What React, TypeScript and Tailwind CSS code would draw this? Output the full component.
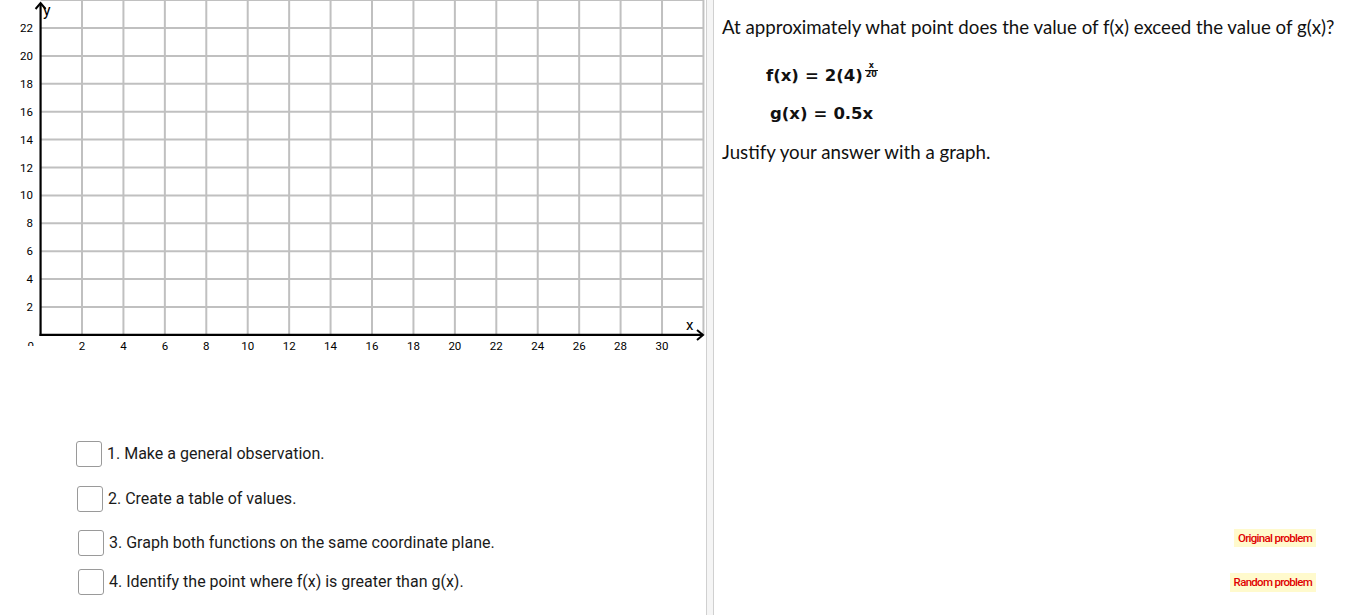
import React from "react";

const ox = 40.57;
const dx = 41.43;
const oy = 334.9;
const dy = 27.9;

function Graph() {
  const vLines = Array.from({ length: 16 }, (_, i) => ox + (i + 1) * dx);
  const hLines = Array.from({ length: 12 }, (_, i) => oy - (i + 1) * dy);
  return (
    <svg width={706} height={360} className="block" style={{ fontFamily: "Roboto, sans-serif" }}>
      <defs>
        <clipPath id="zeroClip">
          <rect x={0} y={336} width={40} height={10} />
        </clipPath>
      </defs>
      {vLines.map((x, i) => (
        <line key={"v" + i} x1={x} y1={0} x2={x} y2={oy} stroke="#c0c0c0" strokeWidth={2} />
      ))}
      {hLines.map((y, i) => (
        <line key={"h" + i} x1={ox} y1={y} x2={704} y2={y} stroke="#c0c0c0" strokeWidth={2} />
      ))}
      <line x1={ox} y1={4} x2={ox} y2={oy + 1} stroke="#000" strokeWidth={2.2} />
      <line x1={ox - 1} y1={oy} x2={703} y2={oy} stroke="#000" strokeWidth={2.2} />
      <polyline points={`${ox - 5},9 ${ox},3 ${ox + 5},9`} fill="none" stroke="#000" strokeWidth={2} />
      <polyline points={`${697},${oy - 5} ${703},${oy} ${697},${oy + 5}`} fill="none" stroke="#000" strokeWidth={2} />
      <text x={43} y={16} fontSize={16} fill="#000">y</text>
      <text x={686} y={330} fontSize={15} fill="#000">x</text>
      {Array.from({ length: 15 }, (_, i) => (
        <text key={"xl" + i} x={ox + (i + 1) * dx} y={350} fontSize={11.5} textAnchor="middle" fill="#000">
          {(i + 1) * 2}
        </text>
      ))}
      {Array.from({ length: 11 }, (_, i) => (
        <text key={"yl" + i} x={33} y={oy - (i + 1) * dy + 4} fontSize={11.5} textAnchor="end" fill="#000">
          {(i + 1) * 2}
        </text>
      ))}
      <text x={34} y={350} fontSize={11.5} textAnchor="end" fill="#000" clipPath="url(#zeroClip)">0</text>
    </svg>
  );
}

function Check({ label, cls }: { label: string; cls: string }) {
  return (
    <div className={"flex items-center " + cls}>
      <div className="w-[26px] h-[26px] rounded-[3px] border border-[#9a9a9a] bg-white" />
      <span className="ml-[5px] text-[16px] text-[#1a1a1a]" style={{ fontFamily: "Roboto, sans-serif" }}>
        {label}
      </span>
    </div>
  );
}

export default function App() {
  return (
    <div className="flex w-[1348px] h-[615px] bg-white overflow-hidden">
      <div className="w-[706px] flex flex-col shrink-0">
        <Graph />
        <div className="flex flex-col">
          <Check cls="mt-[81px] pl-[76px]" label="1. Make a general observation." />
          <Check cls="mt-[19px] pl-[77px]" label="2. Create a table of values." />
          <Check cls="mt-[18px] pl-[78px]" label="3. Graph both functions on the same coordinate plane." />
          <Check cls="mt-[13px] pl-[78px]" label="4. Identify the point where f(x) is greater than g(x)." />
        </div>
      </div>
      <div className="w-[8px] shrink-0 bg-[#f5f5f5] border-l border-r border-[#d0d0d0]" />
      <div className="flex-1 flex flex-col h-full">
        <div className="pl-[8px] text-[#111]">
          <div className="mt-[16px] text-[18.7px] leading-[22px]" style={{ fontFamily: "Lato, sans-serif" }}>
            At approximately what point does the value of f(x) exceed the value of g(x)?
          </div>
          <div
            className="mt-[26px] ml-[44px] font-bold text-[16.5px] leading-[24px] flex items-start"
            style={{ fontFamily: "'DejaVu Sans', sans-serif" }}
          >
            <span>f(x)</span>
            <span className="mx-[6px]">=</span>
            <span>2(4)</span>
            <span className="flex flex-col items-center text-[8px] leading-[8px] ml-[2px] mt-[-2px]">
              <span>x</span>
              <span className="border-t border-[#111] px-[1px] leading-[8px]">20</span>
            </span>
          </div>
          <div
            className="mt-[14px] ml-[48px] font-bold text-[16.5px] leading-[24px] flex"
            style={{ fontFamily: "'DejaVu Sans', sans-serif" }}
          >
            <span>g(x)</span>
            <span className="mx-[6px]">=</span>
            <span>0.5x</span>
          </div>
          <div className="mt-[15px] text-[18.7px] leading-[22px]" style={{ fontFamily: "Lato, sans-serif" }}>
            Justify your answer with a graph.
          </div>
        </div>
        <div className="mt-auto mb-[23px] pr-[32px] flex flex-col items-end" style={{ fontFamily: "Roboto, sans-serif" }}>
          <div className="bg-[#fffacd] text-[#e00000] font-medium text-[11.5px] leading-[18px] px-[4px] tracking-[-0.7px]">
            Original problem
          </div>
          <div className="mt-[26px] bg-[#fffacd] text-[#e00000] font-medium text-[11.5px] leading-[19px] px-[4px] tracking-[-0.7px]">
            Random problem
          </div>
        </div>
      </div>
    </div>
  );
}
